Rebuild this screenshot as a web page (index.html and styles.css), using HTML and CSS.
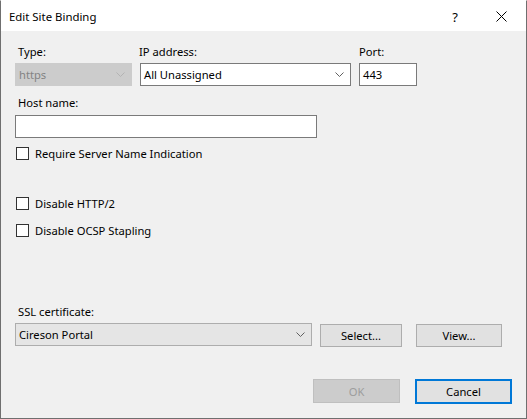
FILE: index.html
```html
<!DOCTYPE html>
<html>
<head>
<meta charset="utf-8">
<link rel="stylesheet" href="styles.css">
</head>
<body>
<div class="window">
  <div class="titlebar">
    <span class="title">Edit Site Binding</span>
    <span class="help">?</span>
    <svg class="close" width="11" height="11" viewBox="0 0 11 11"><path d="M0.5 0.5 L10.5 10.5 M10.5 0.5 L0.5 10.5" stroke="#000" stroke-width="1" fill="none"/></svg>
  </div>
  <div class="content">
    <div class="row1">
      <div class="field f-type">
        <div class="label ind">Type:</div>
        <div class="combo disabled"><span>https</span><svg class="chev" width="9" height="5" viewBox="0 0 9 5"><polyline points="0.5,0.5 4.5,4.5 8.5,0.5" fill="none" stroke="#b3b3b3" stroke-width="1"/></svg></div>
      </div>
      <div class="field f-ip">
        <div class="label">IP address:</div>
        <div class="combo"><span>All Unassigned</span><svg class="chev" width="9" height="5" viewBox="0 0 9 5"><polyline points="0.5,0.5 4.5,4.5 8.5,0.5" fill="none" stroke="#606060" stroke-width="1"/></svg></div>
      </div>
      <div class="field f-port">
        <div class="label">Port:</div>
        <div class="textbox">443</div>
      </div>
    </div>
    <div class="label ind host-label">Host name:</div>
    <div class="textbox host"></div>
    <label class="check sni"><span class="box"></span>Require Server Name Indication</label>
    <label class="check http2"><span class="box"></span>Disable HTTP/2</label>
    <label class="check ocsp"><span class="box"></span>Disable OCSP Stapling</label>
    <div class="label ind ssl-label">SSL certificate:</div>
    <div class="ssl-row">
      <div class="combo btncombo"><span>Cireson Portal</span><svg class="chev" width="9" height="5" viewBox="0 0 9 5"><polyline points="0.5,0.5 4.5,4.5 8.5,0.5" fill="none" stroke="#606060" stroke-width="1"/></svg></div>
      <div class="btn select">Select...</div>
      <div class="btn view">View...</div>
    </div>
    <div class="footer">
      <div class="btn ok disabled">OK</div>
      <div class="btn cancel">Cancel</div>
    </div>
  </div>
</div>
</body>
</html>
```

FILE: styles.css
```css
* { box-sizing: border-box; }
html, body { margin: 0; padding: 0; }
body {
  font-family: "Noto Sans", "Open Sans", sans-serif;
  font-size: 11.2px;
  color: #000;
  background: #f0f0f0;
}
.window {
  width: 527px;
  height: 419px;
  border: 1px solid #6f6f6f;
  border-top-color: #ffffff;
  background: #f0f0f0;
  display: flex;
  flex-direction: column;
}
.titlebar {
  height: 30px;
  background: #fff;
  display: flex;
  align-items: center;
  padding-left: 8px;
  flex-shrink: 0;
}
.title { font-size: 11.4px; flex: 1; padding-top: 1px; }
.help { font-size: 13px; margin-right: 38px; padding-top: 1px; }
.close { margin-right: 19px; }
.content {
  flex: 1;
  padding: 13px 0 0 14px;
  display: flex;
  flex-direction: column;
}
.label { line-height: 15px; height: 15px; }
.ind { padding-left: 3px; }
.row1 { display: flex; gap: 8px; }
.f-type { width: 117px; }
.f-ip { width: 211px; }
.f-ip .label { margin-left: -1px; }
.f-port { width: 58px; }
.field .label { margin-bottom: 4px; }
.combo {
  height: 23px;
  border: 1px solid #7a7a7a;
  background: #fff;
  display: flex;
  align-items: center;
  justify-content: space-between;
  padding: 0 6px 0 3px;
  line-height: 15px;
}
.combo.disabled {
  background: #cccccc;
  border-color: #cccccc;
  color: #838383;
}
.textbox {
  height: 23px;
  border: 1px solid #7a7a7a;
  background: #fff;
  padding: 3px 0 0 3px;
  line-height: 15px;
}
.host-label { margin-top: 9px; margin-bottom: 5px; }
.host { width: 302px; }
.check {
  display: flex;
  align-items: center;
  height: 15px;
  line-height: 15px;
}
.box {
  width: 13px;
  height: 13px;
  border: 1px solid #333;
  background: #fff;
  margin: 0 6px 0 1px;
}
.sni { margin-top: 8px; }
.http2 { margin-top: 35px; }
.ocsp { margin-top: 12px; }
.ssl-label { margin-top: 66px; margin-bottom: 4px; }
.ssl-row { display: flex; align-items: flex-start; }
.btncombo {
  width: 297px;
  background: #e5e5e5;
  border-color: #adadad;
}
.btn {
  height: 23px;
  border: 1px solid #adadad;
  background: #e1e1e1;
  display: flex;
  align-items: center;
  justify-content: center;
  line-height: 15px;
}
.select { width: 82px; margin-left: 8px; margin-top: 1px; }
.view { width: 86px; margin-left: 14px; margin-top: 1px; }
.footer {
  display: flex;
  margin-top: 32px;
  padding-left: 298px;
}
.ok { width: 87px; height: 24px; }
.btn.disabled { background: #cccccc; border-color: #bfbfbf; color: #9d9d9d; }
.cancel {
  width: 97px;
  height: 25px;
  margin-left: 15px;
  border: 2px solid #0078d7;
}
```
